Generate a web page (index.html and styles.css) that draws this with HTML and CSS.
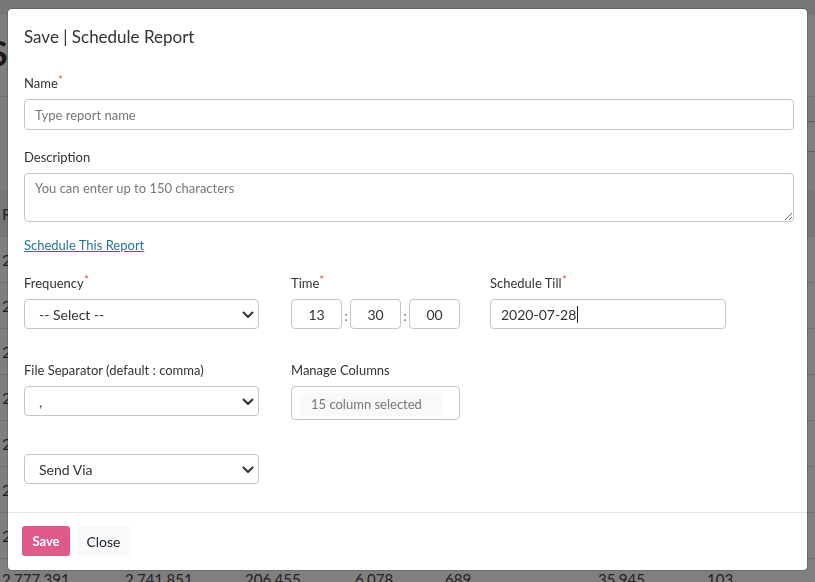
FILE: index.html
```html
<!DOCTYPE html>
<html lang="en">
<head>
<meta charset="utf-8">
<title>Save | Schedule Report</title>
<link rel="stylesheet" href="styles.css">
</head>
<body>
<div class="page">
  <div class="topbar"></div>
  <div class="page-head"><h1 class="page-title">Sc</h1></div>
  <div class="toolbar"><div class="page-search"></div></div>
  <div class="table">
    <div class="trow thead"><span>R</span></div>
    <div class="trow"><span>2</span></div>
    <div class="trow"><span>2</span></div>
    <div class="trow"><span>2</span></div>
    <div class="trow"><span>2</span></div>
    <div class="trow"><span>2</span></div>
    <div class="trow"><span>2</span></div>
    <div class="trow"><span>2</span></div>
    <div class="trow total">
      <span>2,777,391</span><span>2,741,851</span><span>206,455</span><span>6,078</span><span>689</span><span>35,945</span><span>103</span>
    </div>
  </div>
</div>

<div class="backdrop"></div>

<div class="modal">
  <div class="modal-header">
    <h5 class="modal-title">Save | Schedule Report</h5>
  </div>
  <div class="modal-body">
    <div class="field">
      <label class="lbl">Name<span class="req">*</span></label>
      <input class="ctl" type="text" placeholder="Type report name">
    </div>
    <div class="field field-desc">
      <label class="lbl">Description</label>
      <textarea class="ctl area" placeholder="You can enter up to 150 characters"></textarea>
    </div>
    <a class="sched-link" href="#">Schedule This Report</a>

    <div class="grid">
      <div class="cell c1">
        <label class="lbl">Frequency<span class="req">*</span></label>
        <div class="select-wrap">
          <select class="ctl sel"><option>-- Select --</option></select>
          <svg class="chev" width="12" height="8" viewBox="0 0 12 8"><path d="M1.5 1.5 L6 6 L10.5 1.5" fill="none" stroke="#333" stroke-width="2" stroke-linecap="round" stroke-linejoin="round"/></svg>
        </div>
      </div>
      <div class="cell c2">
        <label class="lbl">Time<span class="req">*</span></label>
        <div class="time">
          <input class="ctl tnum" type="text" value="13"><span class="colon">:</span><input class="ctl tnum" type="text" value="30"><span class="colon">:</span><input class="ctl tnum" type="text" value="00">
        </div>
      </div>
      <div class="cell c3">
        <label class="lbl">Schedule Till<span class="req">*</span></label>
        <div class="ctl date">2020-07-28<span class="caret"></span></div>
      </div>

      <div class="cell c1">
        <label class="lbl">File Separator (default : comma)</label>
        <div class="select-wrap">
          <select class="ctl sel"><option>,</option></select>
          <svg class="chev" width="12" height="8" viewBox="0 0 12 8"><path d="M1.5 1.5 L6 6 L10.5 1.5" fill="none" stroke="#333" stroke-width="2" stroke-linecap="round" stroke-linejoin="round"/></svg>
        </div>
      </div>
      <div class="cell c2">
        <label class="lbl">Manage Columns</label>
        <div class="cols-box"><span class="cols-chip">15 column selected</span></div>
      </div>
      <div class="cell c3"></div>

      <div class="cell c1 send">
        <div class="select-wrap">
          <select class="ctl sel"><option>Send Via</option></select>
          <svg class="chev" width="12" height="8" viewBox="0 0 12 8"><path d="M1.5 1.5 L6 6 L10.5 1.5" fill="none" stroke="#333" stroke-width="2" stroke-linecap="round" stroke-linejoin="round"/></svg>
        </div>
      </div>
    </div>
  </div>
  <div class="modal-footer">
    <button class="btn btn-save" type="button">Save</button>
    <button class="btn btn-close" type="button">Close</button>
  </div>
</div>
</body>
</html>
```

FILE: styles.css
```css
* { box-sizing: border-box; }
html, body { margin: 0; padding: 0; }
body {
  width: 815px;
  height: 582px;
  overflow: hidden;
  font-family: Lato, "Open Sans", "Liberation Sans", sans-serif;
  color: #333;
  background: #fff;
}

/* ---------- page underneath ---------- */
.page { width: 815px; overflow: hidden; }
.topbar { height: 15px; background: #eeeeee; }
.page-head { height: 82px; background: #fff; border-bottom: 1px solid #e2e2e2; padding-top: 18px; }
.page-title {
  margin: 0 0 0 -11px;
  font-size: 34px;
  font-weight: 700;
  line-height: 40px;
  color: #333;
}
.toolbar { height: 93px; background: #f9f9f9; padding-top: 24px; }
.page-search {
  margin-left: 806px;
  width: 200px;
  height: 31px;
  border: 1px solid #bbb;
  border-radius: 4px;
  background: #fff;
}
.table { background: #fff; }
.trow {
  height: 46px;
  border-bottom: 1px solid #dcdcdc;
  padding-left: 2px;
  display: flex;
  align-items: center;
  font-size: 16px;
  color: #444;
}
.thead { height: 47px; background: #ececec; }
.total {
  display: grid;
  grid-template-columns: 123px 120px 110px 90px 153px 109px 1fr;
  align-items: start;
  padding-top: 11px;
  border-bottom: 0;
  font-size: 15px;
}

.backdrop {
  position: fixed;
  inset: 0;
  background: rgba(0, 0, 0, 0.5);
}

/* ---------- modal ---------- */
.modal {
  position: fixed;
  left: 8px;
  top: 9px;
  width: 799px;
  background: #fff;
  border-radius: 4px;
  box-shadow: 0 0 0 1px rgba(0,0,0,0.15);
}
.modal-header { padding: 16px 16px 0; }
.modal-title {
  margin: 0;
  font-size: 17px;
  line-height: 24px;
  font-weight: 400;
  color: #333;
}
.modal-body { padding: 24px 13px 28px 16px; }

.lbl {
  display: block;
  height: 20px;
  font-size: 13px;
  line-height: 20px;
  margin-bottom: 6px;
  color: #333;
}
.req { color: #e5534b; font-size: 12px; vertical-align: top; line-height: 14px; }

.field { margin-bottom: 17px; }
.field-desc { margin-bottom: 13px; }

.ctl {
  display: block;
  width: 100%;
  height: 31px;
  border: 1px solid #c6c6c6;
  border-radius: 4px;
  background: #fff;
  font-family: inherit;
  font-size: 13px;
  color: #333;
  padding: 0 10px;
  outline: none;
}
.ctl::placeholder { color: #777; }
.area {
  height: 49px;
  padding: 6px 10px;
  resize: vertical;
}

.sched-link {
  display: block;
  width: max-content;
  font-size: 13px;
  line-height: 20px;
  color: #1f7698;
  text-decoration: underline;
}

.grid {
  margin-top: 18px;
  display: grid;
  grid-template-columns: 267px 199px 236px;
  row-gap: 31px;
}
.c1 { width: 235px; }
.c2 { width: 169px; }
.c3 { width: 236px; }
.select-wrap { position: relative; }
.sel {
  height: 30px;
  appearance: none;
  -webkit-appearance: none;
  padding: 0 30px 0 14px;
  font-size: 14px;
  color: #333;
}
.chev { position: absolute; right: 5px; top: 12px; pointer-events: none; }

.time { display: flex; align-items: center; }
.tnum {
  flex: none;
  width: 51px;
  height: 30px;
  text-align: center;
  padding: 0;
  font-size: 14px;
}
.colon { flex: none; width: 8px; text-align: center; font-size: 13px; color: #666; padding-top: 4px; }

.date {
  height: 30px;
  display: flex;
  align-items: center;
  font-size: 14px;
  padding-left: 10px;
}
.caret { display: inline-block; width: 1px; height: 17px; background: #222; margin-left: 1px; }

.cols-box {
  height: 34px;
  width: 169px;
  border: 1px solid #c6c6c6;
  border-radius: 4px;
  padding: 6px 0 0 9px;
}
.cols-chip {
  display: inline-block;
  width: 141px;
  height: 21px;
  line-height: 21px;
  padding-left: 10px;
  background: #f8f9fa;
  border-radius: 3px;
  box-shadow: 0 0 2px rgba(0,0,0,0.08);
  font-size: 13px;
  color: #777;
}
.send { margin-top: 3px; }

.modal-footer {
  border-top: 1px solid #e5e5e5;
  padding: 13px 14px 14px;
  display: flex;
  gap: 7px;
}
.btn {
  height: 30px;
  border: 0;
  border-radius: 3px;
  font-family: inherit;
  font-size: 13px;
  cursor: pointer;
}
.btn-save {
  width: 48px;
  background: #e0598b;
  color: #fff;
  font-weight: 700;
}
.btn-close {
  width: 53px;
  background: #f8f9fa;
  color: #212529;
  font-size: 14px;
}
```
